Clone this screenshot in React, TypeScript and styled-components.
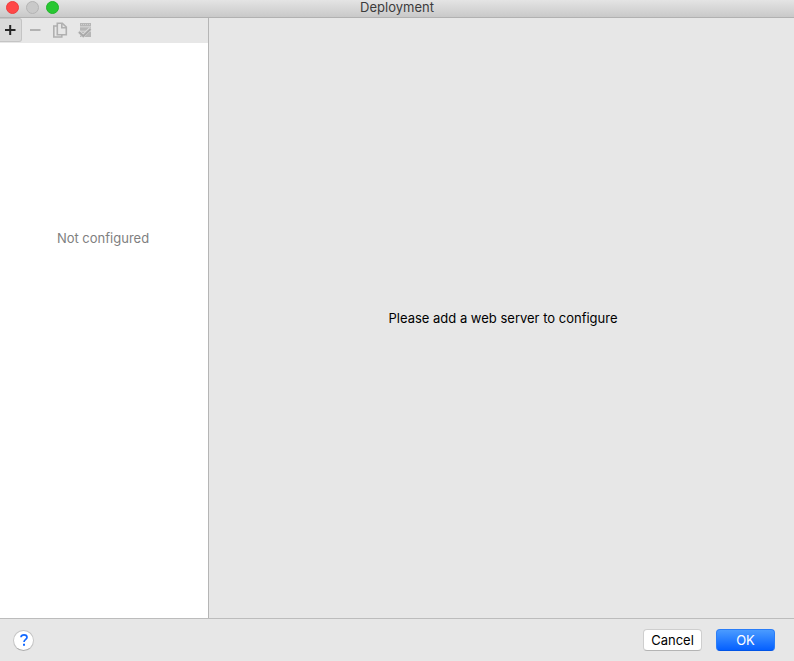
import React from "react";
import styled, { createGlobalStyle } from "styled-components";

const GlobalStyle = createGlobalStyle`
  * { box-sizing: border-box; }
  body {
    margin: 0;
    background: #e7e7e7;
    color: #000;
    font-family: Inter, "Liberation Sans", sans-serif;
    font-size: 13px;
    line-height: 20px;
  }
  button { font: inherit; }
`;

const Window = styled.div`
  display: flex;
  flex-direction: column;
  min-height: 100vh;
`;

const TitleBar = styled.header`
  display: grid;
  grid-template-columns: 1fr auto 1fr;
  height: 18px;
  background: linear-gradient(#e4e4e4, #c9c9c9);
  border-bottom: 1px solid #b1b1b1;
`;

const WindowControls = styled.div`
  display: flex;
  gap: 7px;
  padding: 1px 6px;
`;

const WindowControl = styled.button<{ $fill: string; $edge: string }>`
  width: 13px;
  height: 13px;
  padding: 0;
  border: 1px solid ${(p) => p.$edge};
  border-radius: 50%;
  background: ${(p) => p.$fill};
`;

const Title = styled.h1`
  margin: 0;
  font-size: 13px;
  font-weight: 400;
  line-height: 15px;
  color: #3c3c3c;
`;

const Content = styled.main`
  display: flex;
  flex: 1;
`;

const Sidebar = styled.aside`
  display: flex;
  flex-direction: column;
  width: 209px;
  border-right: 1px solid #b5b5b5;
`;

const Toolbar = styled.div`
  display: flex;
  align-items: flex-start;
  gap: 3px;
  height: 25px;
`;

const ToolButton = styled.button<{ $active?: boolean }>`
  display: flex;
  align-items: center;
  justify-content: flex-start;
  width: 22px;
  height: 24px;
  padding: 0 2px;
  border: 1px solid ${(p) => (p.$active ? "#c4c4c4" : "transparent")};
  border-left-width: 0;
  border-radius: 0 3px 3px 0;
  background: ${(p) => (p.$active ? "#dadada" : "transparent")};
`;

const ServerList = styled.div`
  display: grid;
  flex: 1;
  grid-template-rows: 1fr auto 2fr;
  background: #fff;
`;

const EmptyText = styled.p`
  grid-row: 2;
  margin: 0;
  padding-right: 2px;
  text-align: center;
  color: #808080;
`;

const Details = styled.section`
  display: flex;
  flex: 1;
  align-items: center;
  justify-content: center;
`;

const Message = styled.p`
  margin: 0;
  padding-left: 3px;
`;

const Footer = styled.footer`
  display: flex;
  align-items: center;
  gap: 14px;
  height: 43px;
  padding: 0 19px 0 13px;
  border-top: 1px solid #bcbcbc;
`;

const HelpButton = styled.button`
  display: flex;
  align-items: center;
  justify-content: center;
  width: 21px;
  height: 21px;
  margin-right: auto;
  padding: 0;
  border: 1px solid #c5c5c5;
  border-bottom-color: #acacac;
  border-radius: 50%;
  background: #fff;
  color: #1369ff;
`;

const PushButton = styled.button<{ $primary?: boolean }>`
  width: 59px;
  height: 22px;
  padding: 0;
  border: 1px solid ${(p) => (p.$primary ? "#2a7df8" : "#cecece")};
  border-bottom-color: ${(p) => (p.$primary ? "#0054e6" : "#b4b4b4")};
  border-radius: 4px;
  background: ${(p) => (p.$primary ? "linear-gradient(#4a9bff, #0560ff)" : "#fff")};
  color: ${(p) => (p.$primary ? "#fff" : "#000")};
`;

const PlusIcon = () => (
  <svg width="16" height="16" viewBox="0 0 16 16" fill="none" stroke="#262626" strokeWidth="2" aria-hidden="true">
    <path d="M3 8h10.500M8.200 3v10" />
  </svg>
);

const MinusIcon = () => (
  <svg width="16" height="16" viewBox="0 0 16 16" fill="none" stroke="#b2b2b2" strokeWidth="2" aria-hidden="true">
    <path d="M3 8h10.500" />
  </svg>
);

const CopyIcon = () => (
  <svg width="16" height="16" viewBox="0 0 16 16" fill="none" stroke="#b0b0b0" strokeWidth="1.600" aria-hidden="true">
    <path d="M5 4H1.800v11h8v-2" />
    <path d="M5.300 1.300h5l4 3.700v7.800h-9z" />
    <path d="M9.800 1.300v4.500h4.500" />
  </svg>
);

const ServerCheckIcon = () => (
  <svg width="16" height="16" viewBox="0 0 16 16" fill="none" aria-hidden="true">
    <path d="M3 1h11v3.500H3zM3 5.300h11v3.500H3zM3 9.600h11V15H3z" fill="#b6b6b6" />
    <path d="M4 2.500h1m1 0h1m1 0h1m1 0h1m1 0h1" stroke="#cfcfcf" />
    <path d="M1.500 9.500l4.700 4.300L13.500 6.500" stroke="#dcdcdc" strokeWidth="3.400" />
    <path d="M2 10l4.300 4L13.500 7" stroke="#a9a9a9" strokeWidth="2" />
  </svg>
);

const QuestionIcon = () => (
  <svg width="12" height="14" viewBox="0 0 12 14" fill="none" stroke="currentColor" strokeWidth="1.700" aria-hidden="true">
    <path d="M3 4.300C3 2.600 4.200 1.800 6 1.800s3 1 3 2.500C9 6.400 6 6.400 6 9.100" />
    <path d="M6 10.800v2" strokeWidth="2" />
  </svg>
);

export default function App() {
  return (
    <Window>
      <GlobalStyle />
      <TitleBar>
        <WindowControls>
          <WindowControl $fill="#ff4747" $edge="#ed3d3d" aria-label="Close" />
          <WindowControl $fill="#c9c9c9" $edge="#b4b4b4" aria-label="Minimize" disabled />
          <WindowControl $fill="#28c732" $edge="#20b52a" aria-label="Zoom" />
        </WindowControls>
        <Title>Deployment</Title>
      </TitleBar>
      <Content>
        <Sidebar>
          <Toolbar>
            <ToolButton $active aria-label="Add"><PlusIcon /></ToolButton>
            <ToolButton aria-label="Remove" disabled><MinusIcon /></ToolButton>
            <ToolButton aria-label="Copy" disabled><CopyIcon /></ToolButton>
            <ToolButton aria-label="Use as default" disabled><ServerCheckIcon /></ToolButton>
          </Toolbar>
          <ServerList>
            <EmptyText>Not configured</EmptyText>
          </ServerList>
        </Sidebar>
        <Details>
          <Message>Please add a web server to configure</Message>
        </Details>
      </Content>
      <Footer>
        <HelpButton aria-label="Help"><QuestionIcon /></HelpButton>
        <PushButton>Cancel</PushButton>
        <PushButton $primary>OK</PushButton>
      </Footer>
    </Window>
  );
}
